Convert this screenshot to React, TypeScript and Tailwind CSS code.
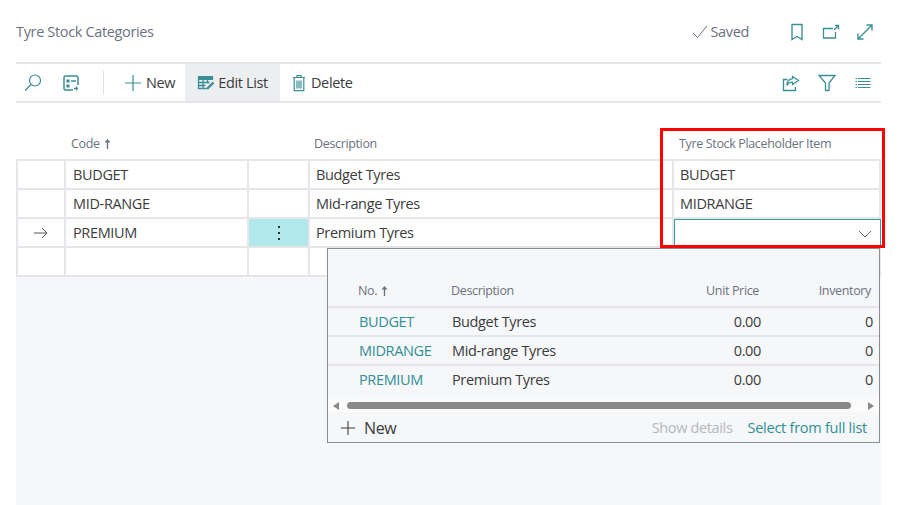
import React from 'react';

const teal = '#3a8f96';

const Svg = ({ w = 20, h = 20, children }: { w?: number; h?: number; children: React.ReactNode }) => (
  <svg width={w} height={h} viewBox={`0 0 ${w} ${h}`} fill="none" stroke={teal} strokeWidth={1.2} className="shrink-0">
    {children}
  </svg>
);

const SearchIcon = () => (
  <Svg>
    <circle cx="12" cy="7.5" r="5.5" />
    <path d="M8 11.5 2 17.5" />
  </Svg>
);

const LayoutIcon = () => (
  <Svg>
    <path d="M10 3H4.5A1.5 1.5 0 0 0 3 4.5v11A1.5 1.5 0 0 0 4.5 17H12" strokeWidth={1.5} />
    <path d="M10 3h5.5A1.5 1.5 0 0 1 17 4.5V12" strokeWidth={1.5} />
    <path d="M6 7h2v2H6zM6 12h2v2H6z" fill={teal} />
    <path d="M10 8h5M13 15.5h4M15.5 13.5v4" strokeWidth={1.3} />
  </Svg>
);

const PlusIcon = ({ color = teal, size = 18 }: { color?: string; size?: number }) => (
  <svg width={size} height={size} viewBox="0 0 18 18" fill="none" stroke={color} strokeWidth={1.2} className="shrink-0">
    <path d="M9 1v16M1 9h16" />
  </svg>
);

const EditListIcon = () => (
  <Svg w={18} h={18}>
    <path d="M1.5 2.5h14v3h-14z" fill={teal} />
    <path d="M1.5 5.5v9h8M6 5.5v9M10.5 5.5v4M1.5 8.5h11M1.5 11.5h7" strokeWidth={1.3} />
    <path d="m10 15 6.5-6.5" strokeWidth={2.4} />
  </Svg>
);

const TrashIcon = () => (
  <Svg w={14} h={18}>
    <path d="M1 3.5h12M5 3.5V1.5h4v2M2.2 3.5v13.2h9.6V3.5" />
    <path d="M5 6.5v8M7 6.5v8M9 6.5v8" />
  </Svg>
);

const BookmarkIcon = () => (
  <Svg w={14} h={18}>
    <path d="M2 1.5h10v15l-5-3-5 3z" strokeWidth={1.4} />
  </Svg>
);

const OpenNewIcon = () => (
  <Svg w={18} h={16}>
    <path d="M11 4.5H1.5v9.5h12V8" strokeWidth={1.3} />
    <path d="M12 6l4.5-4.5M13 1.5h3.5V5" strokeWidth={1.3} />
  </Svg>
);

const ExpandIcon = () => (
  <Svg w={18} h={18}>
    <path d="M2 16 16 2M10.5 2H16v5.5M2 10.5V16h5.5" strokeWidth={1.4} />
  </Svg>
);

const ShareIcon = () => (
  <Svg w={18} h={18}>
    <path d="M5.5 5.5H1.5v11h12v-3.5" strokeWidth={1.3} />
    <path d="M10.5 2.5l6 4-6 4V8.2c-3 0-4.6 1-5.6 3.3 0-4 2-6.2 5.6-6.8z" strokeWidth={1.3} />
  </Svg>
);

const FilterIcon = () => (
  <Svg w={18} h={18}>
    <path d="M1 1.5h16l-6 7.5v7.5H7.5V9z" strokeWidth={1.3} />
  </Svg>
);

const ListIcon = () => (
  <Svg w={16} h={12}>
    <path d="M0.5 1.5h1.5M3 1.5h12.5M0.5 4.5h1.5M3 4.5h12.5M0.5 7.5h1.5M3 7.5h12.5M0.5 10.5h1.5M3 10.5h12.5" />
  </Svg>
);

const SortArrow = () => (
  <svg width="7" height="10" viewBox="0 0 7 10" fill="#6b7280" className="shrink-0 -mt-[2px]">
    <path d="M3.5 0 6.5 3.5H4.2V10H2.8V3.5H.5z" />
  </svg>
);

const cell = 'flex items-center h-[29px] pt-[1px] border-b-2 border-r-2 border-[#e6e6ea] text-[14.5px] text-[#3c3c3c]';

const rows = [
  { code: 'BUDGET', desc: 'Budget Tyres', item: 'BUDGET' },
  { code: 'MID-RANGE', desc: 'Mid-range Tyres', item: 'MIDRANGE' },
  { code: 'PREMIUM', desc: 'Premium Tyres', item: '', current: true },
  { code: '', desc: '', item: '' },
];

const lookup = ['BUDGET', 'MIDRANGE', 'PREMIUM'];
const lookupDesc = ['Budget Tyres', 'Mid-range Tyres', 'Premium Tyres'];

const Lookup = () => (
  <div className="absolute left-[311px] top-[145px] w-[553px] h-[195px] bg-[#f6f7f9] border border-[#8c8c8c] z-10 flex flex-col">
    <div className="flex items-end h-[59px] pb-[5px] border-b-2 border-[#e6e6ea] text-[12.5px] text-[#6b7280]">
      <div className="w-[123px] pl-[30px] flex items-center gap-[4px]">
        No. <SortArrow />
      </div>
      <div className="flex-1">Description</div>
      <div className="w-[120px] pr-[8px] text-right">Unit Price</div>
      <div className="w-[112px] pr-[8px] text-right">Inventory</div>
    </div>
    {lookup.map((no, i) => (
      <div
        key={no}
        className={`flex items-center text-[14.5px] text-[#3c3c3c] ${i < 2 ? 'h-[29px] border-b-2 border-[#e6e6ea]' : 'h-[28px]'}`}
      >
        <div className="w-[124px] pl-[31px] text-[#2f8f94]">{no}</div>
        <div className="flex-1">{lookupDesc[i]}</div>
        <div className="w-[118px] pr-[6px] text-right">0.00</div>
        <div className="w-[112px] pr-[6px] text-right">0</div>
      </div>
    ))}
    <div className="flex items-center h-[13px] mt-[5px] bg-[#fbfbfc] px-[5px] gap-[8px]">
      <span className="w-0 h-0 border-y-[4px] border-y-transparent border-r-[6px] border-r-[#8a8a8a]" />
      <div className="flex-1 h-[7px] rounded-full bg-[#8a8a8a] mr-[9px]" />
      <span className="w-0 h-0 border-y-[4px] border-y-transparent border-l-[6px] border-l-[#8a8a8a]" />
    </div>
    <div className="flex items-center flex-1 pt-[2px] pl-[12px] pr-[12px]">
      <PlusIcon color="#3c3c3c" size={16} />
      <span className="ml-[8px] text-[16px] text-[#3c3c3c]">New</span>
      <span className="ml-auto text-[14.5px] text-[#b4b7bc]">Show details</span>
      <span className="ml-[15px] text-[14.5px] tracking-[-0.25px] text-[#2f8f94]">Select from full list</span>
    </div>
  </div>
);

export default function App() {
  return (
    <div className="w-[900px] h-[505px] overflow-hidden bg-white pl-[16px] pr-[19px] flex flex-col font-['Open_Sans','Noto_Sans',sans-serif] tracking-[-0.35px]">
      <div className="flex items-center h-[64px] pt-[1px] shrink-0 border-b-2 border-[#e6e6e8] pr-[7px]">
        <h1 className="text-[14.5px] text-[#6b7280]">Tyre Stock Categories</h1>
        <svg width="16" height="14" viewBox="0 0 16 14" fill="none" stroke="#6b7280" strokeWidth={1} className="ml-auto">
          <path d="m1 8 4.5 4.5L15 1" />
        </svg>
        <span className="ml-[2px] text-[14.5px] text-[#6b7280]">Saved</span>
        <div className="ml-[41px]"><BookmarkIcon /></div>
        <div className="ml-[18px]"><OpenNewIcon /></div>
        <div className="ml-[16px]"><ExpandIcon /></div>
      </div>

      <div className="flex items-center h-[39px] shrink-0 border-b-2 border-[#e6e6ea]">
        <div className="ml-[7px]"><SearchIcon /></div>
        <div className="ml-[18px]"><LayoutIcon /></div>
        <div className="ml-[22px] w-px h-[24px] bg-[#e2e2e4]" />
        <div className="ml-[20px]"><PlusIcon /></div>
        <span className="ml-[4px] text-[14.5px] text-[#3c3c3c]">New</span>
        <div className="ml-[10px] h-full px-[12px] bg-[#edeef0] flex items-center gap-[3px]">
          <EditListIcon />
          <span className="text-[14.5px] text-[#3c3c3c]">Edit List</span>
        </div>
        <div className="ml-[12px]"><TrashIcon /></div>
        <span className="ml-[5px] text-[14.5px] text-[#3c3c3c]">Delete</span>
        <div className="ml-auto"><ShareIcon /></div>
        <div className="ml-[18px]"><FilterIcon /></div>
        <div className="ml-[19px] mr-[10px]"><ListIcon /></div>
      </div>

      <div className="relative flex-1 flex flex-col">
        <div className="grid grid-cols-[49px_183px_61px_364px_1fr] h-[58px] items-end pb-[5px] border-b-2 border-[#e6e6ea] text-[12.5px] text-[#6b7280]">
          <div />
          <div className="pl-[6px] flex items-center gap-[4px]">
            Code <SortArrow />
          </div>
          <div />
          <div className="pl-[5px]">Description</div>
          <div className="pl-[6px]">Tyre Stock Placeholder Item</div>
        </div>
        <div className="grid grid-cols-[48px_183px_61px_364px_1fr] border-l-2 border-[#e6e6ea]">
          {rows.map((r, i) => (
            <React.Fragment key={i}>
              <div className={`${cell} justify-center`}>
                {r.current && (
                  <svg width="16" height="12" viewBox="0 0 16 12" fill="none" stroke="#555" strokeWidth={1}>
                    <path d="M1 6h13M9 1l5 5-5 5" />
                  </svg>
                )}
              </div>
              <div className={`${cell} pl-[7px]`}>{r.code}</div>
              <div className={`${cell} justify-center ${r.current ? 'bg-[#b1e8ec]' : ''}`}>
                {r.current && (
                  <span className="flex flex-col gap-[4px]">
                    <i className="w-[2px] h-[2px] bg-[#333]" />
                    <i className="w-[2px] h-[2px] bg-[#333]" />
                    <i className="w-[2px] h-[2px] bg-[#333]" />
                  </span>
                )}
              </div>
              <div className={`${cell} pl-[6px]`}>{r.desc}</div>
              {r.current ? (
                <div className="flex items-center justify-end h-[29px] border border-[#3a9a9e] pr-[8px]">
                  <svg width="14" height="8" viewBox="0 0 14 8" fill="none" stroke="#666" strokeWidth={1}>
                    <path d="m1 1 6 6 6-6" />
                  </svg>
                </div>
              ) : (
                <div className={`${cell} pl-[6px]`}>{r.item}</div>
              )}
            </React.Fragment>
          ))}
        </div>
        <div className="flex-1 bg-[#f6f7f9]" />
        <Lookup />
        <div className="absolute left-[644px] top-[25px] w-[225px] h-[120px] border-[3px] border-[#ff0000] z-20 pointer-events-none" />
      </div>
    </div>
  );
}
